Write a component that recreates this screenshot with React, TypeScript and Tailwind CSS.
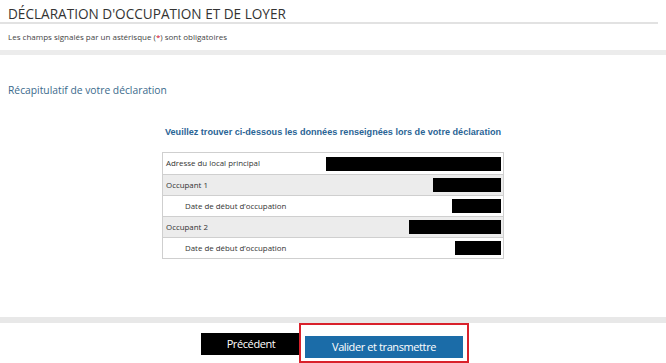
import React from "react";

const rows = [
  { label: "Adresse du local principal", indent: false, gray: false, box: "w-[175px]" },
  { label: "Occupant  1", indent: false, gray: true, box: "w-[68px]" },
  { label: "Date de début d’occupation", indent: true, gray: false, box: "w-[49px]" },
  { label: "Occupant  2", indent: false, gray: true, box: "w-[92px]" },
  { label: "Date de début d’occupation", indent: true, gray: false, box: "w-[46px]" },
];

export default function App() {
  return (
    <div className="w-[666px] h-[363px] bg-white font-['Open_Sans',sans-serif] text-[#333] overflow-hidden">
      <div className="mr-2 border-b-2 border-[#e2e2e2] pl-2 pt-[5px] h-[24px]">
        <h1 className="text-[13.6px] leading-[17px] text-[#333] whitespace-pre">
          DÉCLARATION D'OCCUPATION ET DE LOYER
        </h1>
      </div>
      <p className="pl-2 pt-[7px] text-[8px] leading-[11px] text-[#444]">
        Les champs signalés par un astérisque (<span className="text-[#d0021b]">*</span>) sont obligatoires
      </p>
      <div className="mt-[8px] h-[5px] bg-[#ececec]" />

      <h2 className="pl-2 pt-[28px] text-[10.3px] leading-[14px] text-[#3b6a8c]">
        Récapitulatif de votre déclaration
      </h2>

      <p className="pt-[29px] text-center font-['Liberation_Sans',sans-serif] font-bold text-[9.1px] leading-[12px] text-[#2a6495]">
        Veuillez trouver ci-dessous les données renseignées lors de votre déclaration
      </p>

      <div className="mt-[14px] w-[342px] border border-[#cfcfcf] ml-[162px]">
        {rows.map((r, i) => (
          <div
            key={i}
            className={`flex h-[21px] items-center justify-between pr-[2px] ${
              i > 0 ? "border-t border-[#cfcfcf]" : "h-[20.5px]"
            } ${r.gray ? "bg-[#ececec]" : "bg-white"}`}
          >
            <span className={`text-[7.9px] leading-[11px] ${r.indent ? "pl-[22px]" : "pl-[3px]"}`}>
              {r.label}
            </span>
            <span className={`h-[14px] bg-black ${r.box}`} />
          </div>
        ))}
      </div>

      <div className="mt-[58px] h-[6px] bg-[#e8e8e8]" />

      <div className="flex items-start justify-center pl-[4px]">
        <button className="mt-[10px] h-[22px] w-[100px] bg-black text-white text-[11px] tracking-[-0.4px]">
          Précédent
        </button>
        <div className="ml-[-2px] border-2 border-[#d9212b] px-[4px] pt-[8px] pb-[3px]">
          <button className="h-[22px] w-[158px] bg-[#1b6ca8] text-white text-[11px] tracking-[-0.4px]">
            Valider et transmettre
          </button>
        </div>
      </div>
    </div>
  );
}
